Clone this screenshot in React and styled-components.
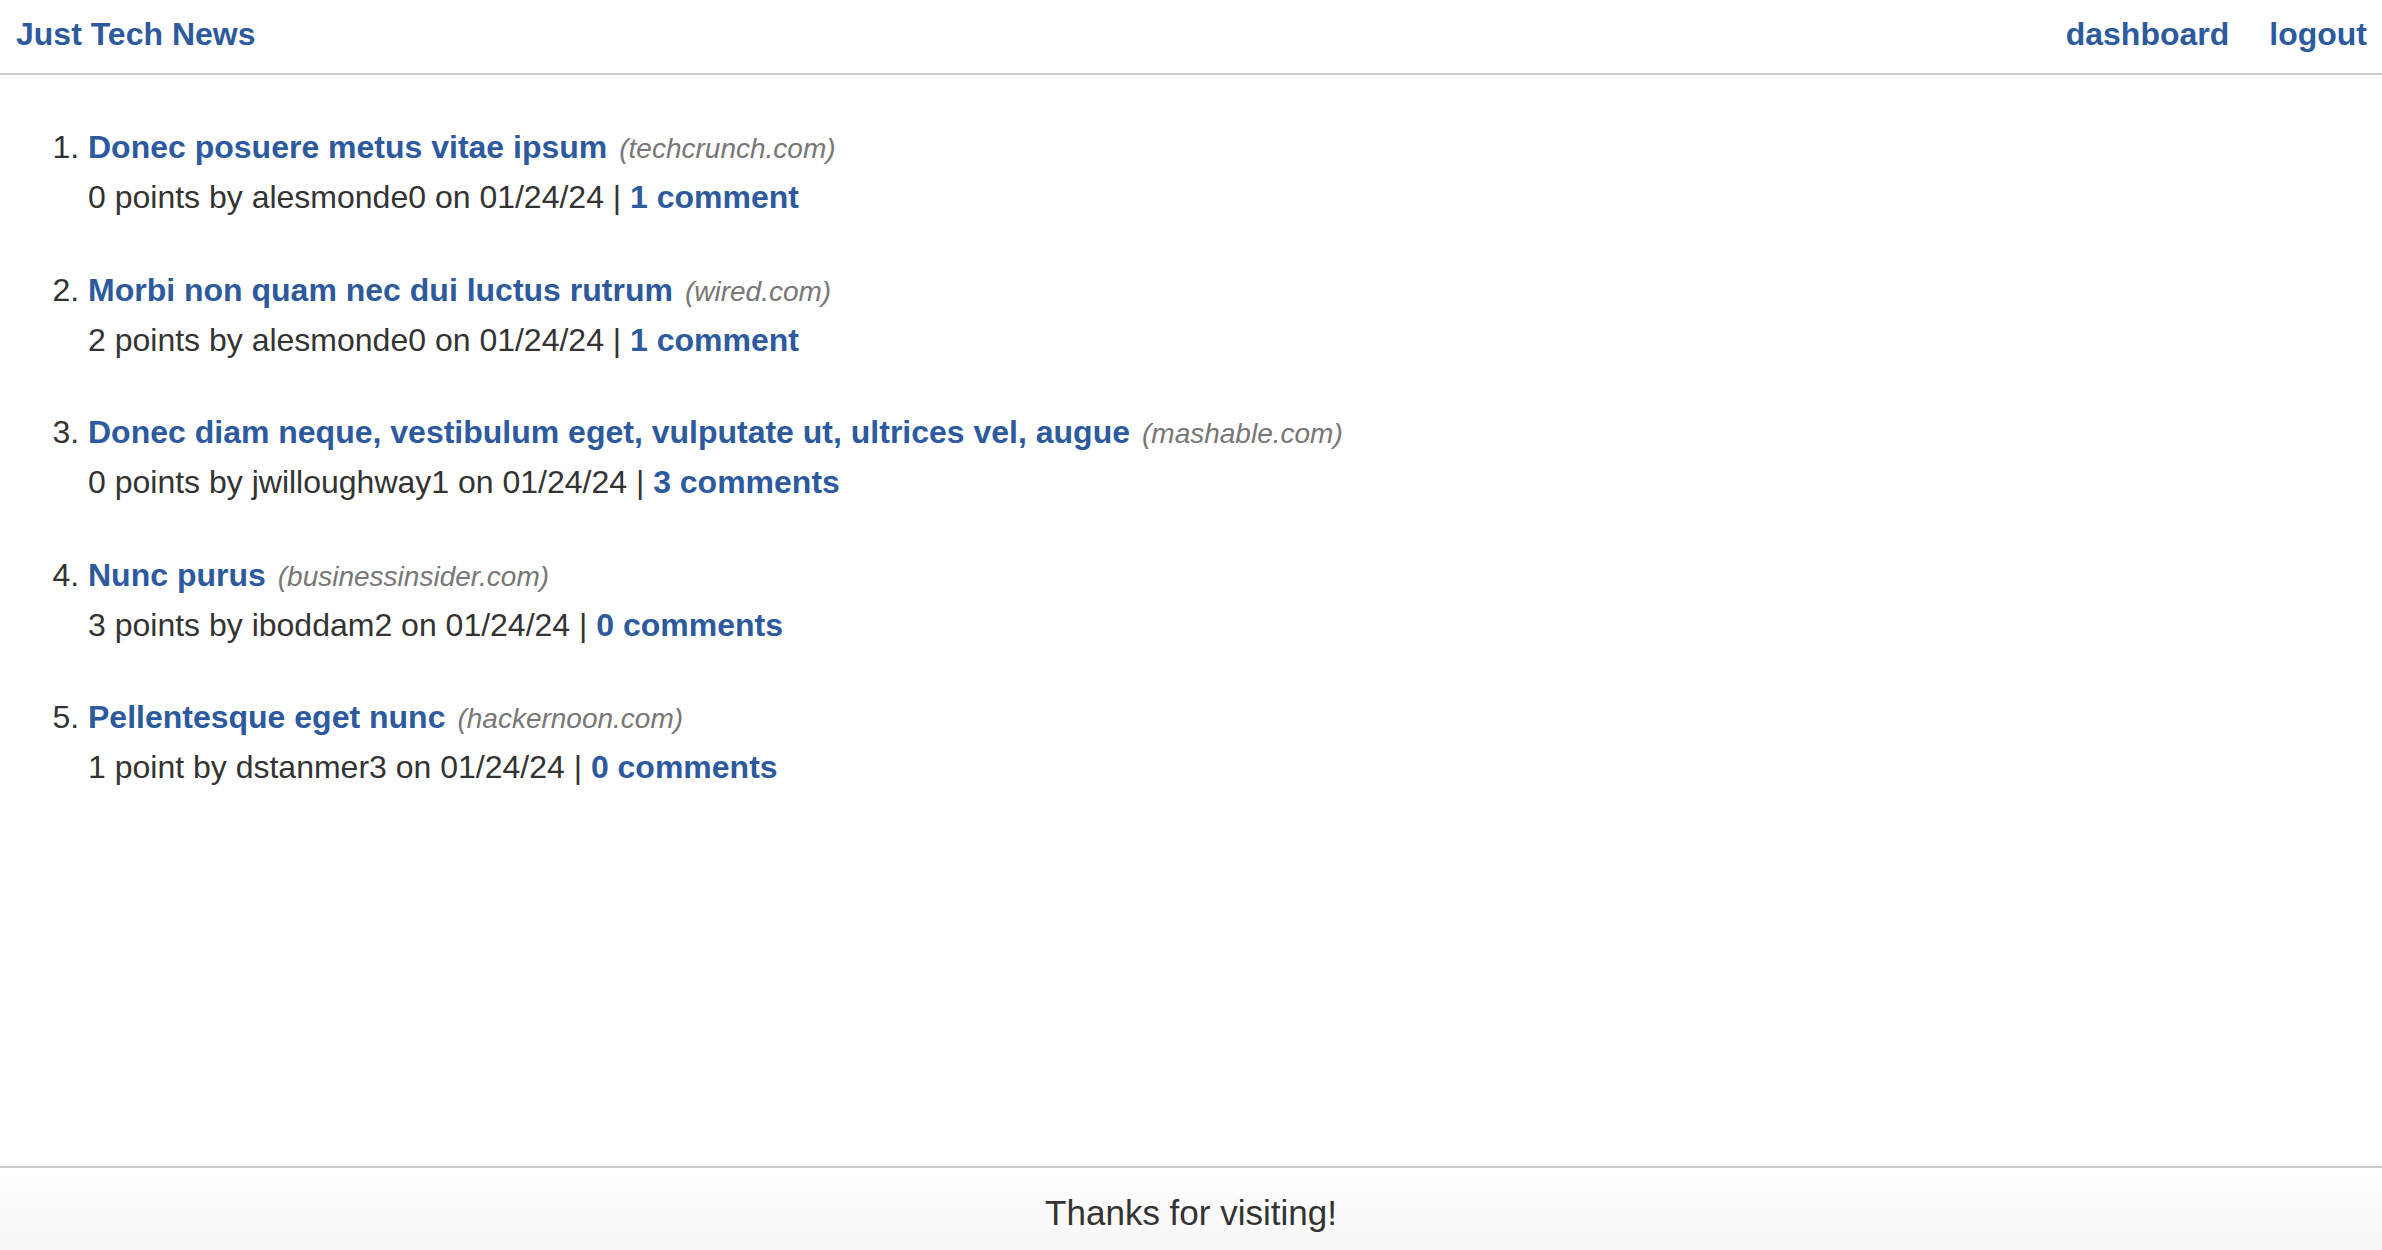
import React from "react";
import { styled, createGlobalStyle } from "styled-components";

const posts = [
  { id: 1, title: "Donec posuere metus vitae ipsum", domain: "techcrunch.com", points: 0, user: "alesmonde0", date: "01/24/24", comments: 1 },
  { id: 2, title: "Morbi non quam nec dui luctus rutrum", domain: "wired.com", points: 2, user: "alesmonde0", date: "01/24/24", comments: 1 },
  { id: 3, title: "Donec diam neque, vestibulum eget, vulputate ut, ultrices vel, augue", domain: "mashable.com", points: 0, user: "jwilloughway1", date: "01/24/24", comments: 3 },
  { id: 4, title: "Nunc purus", domain: "businessinsider.com", points: 3, user: "iboddam2", date: "01/24/24", comments: 0 },
  { id: 5, title: "Pellentesque eget nunc", domain: "hackernoon.com", points: 1, user: "dstanmer3", date: "01/24/24", comments: 0 },
];

const plural = (n, word) => `${n} ${word}${n === 1 ? "" : "s"}`;

const App = () => {
  return (
    <Page>
      <GlobalStyle />
      <Header>
        <Brand href="#">Just Tech News</Brand>
        <Nav>
          <NavLink href="#">dashboard</NavLink>
          <NavLink href="#">logout</NavLink>
        </Nav>
      </Header>
      <Main>
        <PostList>
          {posts.map((post) => (
            <Post key={post.id}>
              <TitleRow>
                <PostTitle href="#">{post.title}</PostTitle>
                <Domain>({post.domain})</Domain>
              </TitleRow>
              <Meta>
                {plural(post.points, "point")} by {post.user} on {post.date} |{" "}
                <CommentLink href="#">{plural(post.comments, "comment")}</CommentLink>
              </Meta>
            </Post>
          ))}
        </PostList>
      </Main>
      <Footer>Thanks for visiting!</Footer>
    </Page>
  );
};

export default App;

const GlobalStyle = createGlobalStyle`
  * {
    box-sizing: border-box;
  }
  body {
    margin: 0;
    font-family: "Liberation Sans", Arial, sans-serif;
    color: #333;
    background: #fff;
  }
`;

const Page = styled.div`
  display: flex;
  flex-direction: column;
  min-height: 100vh;
`;

const Header = styled.header`
  display: flex;
  justify-content: space-between;
  align-items: center;
  height: 75px;
  padding: 0 15px 4px 16px;
  border-bottom: 2px solid #ccc;
`;

const Brand = styled.a`
  font-size: 32px;
  font-weight: 700;
  color: #2d5a9e;
  text-decoration: none;
`;

const Nav = styled.nav`
  display: flex;
  gap: 40px;
`;

const NavLink = styled.a`
  font-size: 32px;
  font-weight: 700;
  color: #2d5a9e;
  text-decoration: none;
`;

const Main = styled.main`
  flex: 1;
  padding: 47px 8px 0;
`;

const PostList = styled.ol`
  margin: 0;
  padding-left: 80px;
  font-size: 32px;
`;

const Post = styled.li`
  margin-bottom: 42.5px;
  line-height: 50px;
`;

const TitleRow = styled.div`
  height: 50px;
`;

const PostTitle = styled.a`
  font-weight: 700;
  color: #2d5a9e;
  text-decoration: none;
`;

const Domain = styled.span`
  margin-left: 12px;
  font-size: 28px;
  line-height: 1;
  font-style: italic;
  color: #777;
`;

const Meta = styled.div`
  height: 50px;
  font-size: 32px;
  color: #333;
`;

const CommentLink = styled.a`
  font-weight: 700;
  color: #2d5a9e;
  text-decoration: none;
`;

const Footer = styled.footer`
  display: flex;
  justify-content: center;
  align-items: center;
  height: 84px;
  padding-top: 8px;
  border-top: 2px solid #ccc;
  background: linear-gradient(to bottom, #fff, #f7f7f7);
  font-size: 35px;
  color: #333;
`;
